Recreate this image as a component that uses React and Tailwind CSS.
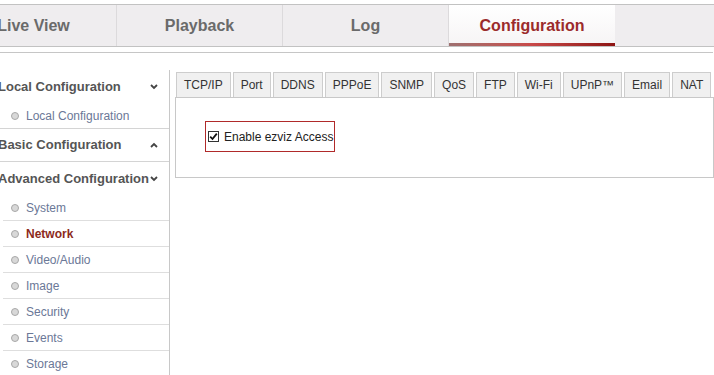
import React from "react";

const topTabs = ["Live View", "Playback", "Log", "Configuration"];
const subTabs = ["TCP/IP", "Port", "DDNS", "PPPoE", "SNMP", "QoS", "FTP", "Wi-Fi", "UPnP™", "Email", "NAT"];
const advItems = ["System", "Network", "Video/Audio", "Image", "Security", "Events", "Storage"];

const Chevron = ({ up }) => (
  <svg width="8" height="6" viewBox="0 0 8 6" className="shrink-0">
    <path
      d={up ? "M1 5 L4 2 L7 5" : "M1 1 L4 4 L7 1"}
      fill="none"
      stroke="#444"
      strokeWidth="1.8"
    />
  </svg>
);

const Dot = () => (
  <span className="w-[8px] h-[8px] rounded-full bg-[#d8d8d8] border border-[#a8a8a8] shrink-0" />
);

const Header = ({ label, up, border }) => (
  <div
    className={`h-[33px] flex items-center justify-between pr-[11px] ${
      border ? "border-b border-[#d4d4d4]" : ""
    }`}
  >
    <span className="-ml-[2px] whitespace-nowrap text-[13px] font-bold text-[#555]">
      {label}
    </span>
    <Chevron up={up} />
  </div>
);

export default function App() {
  return (
    <div
      className="w-[714px] h-[375px] overflow-hidden bg-white"
      style={{ fontFamily: '"Liberation Sans", Arial, sans-serif' }}
    >
      {/* Top navigation */}
      <div className="mt-[4px] h-[43px] flex border-y border-[#c2c2c2] bg-[#efedef]">
        {topTabs.map((t, i) => {
          const active = t === "Configuration";
          return (
            <div
              key={t}
              className={`relative w-[166px] shrink-0 flex items-center justify-center text-[16px] font-bold ${
                i === 0 ? "-ml-[49px]" : ""
              } ${
                active
                  ? "bg-gradient-to-b from-white to-[#f6f4f5] text-[#9b2b2b]"
                  : "border-r border-[#dcdadc] text-[#6a6a6a]"
              }`}
            >
              {t}
              {active && (
                <span className="absolute left-0 right-0 bottom-0 h-[3px] bg-gradient-to-r from-[#9e7070] via-[#c84848] to-[#8e1414]" />
              )}
            </div>
          );
        })}
      </div>
      <div className="mt-[5px] h-px bg-[#c6c6c6] w-[713px]" />

      <div className="flex">
        {/* Sidebar */}
        <div className="w-[170px] shrink-0 mt-[17px] border-r border-[#c8c8c8] h-[310px]">
          <Header label="Local Configuration" />
          <div className="h-[26px] flex items-center gap-[7px] pl-[11px] border-b border-[#d4d4d4]">
            <Dot />
            <span className="text-[12px] text-[#6b7897]">Local Configuration</span>
          </div>
          <Header label="Basic Configuration" up border />
          <Header label="Advanced Configuration" />
          {advItems.map((it) => (
            <div
              key={it}
              className="ml-[3px] h-[26px] flex items-center gap-[7px] pl-[8px] border-b border-[#dedede]"
            >
              <Dot />
              <span
                className={`text-[12px] ${
                  it === "Network" ? "font-bold text-[#8c2a1c]" : "text-[#6b7897]"
                }`}
              >
                {it}
              </span>
            </div>
          ))}
        </div>

        {/* Content */}
        <div className="ml-[5px] w-[539px] mt-[19px]">
          <div className="flex gap-[2px] pl-[1px]">
            {subTabs.map((t) => (
              <div
                key={t}
                className="h-[25px] px-[7px] flex items-center bg-[#f0f0f0] border border-b-0 border-[#cdcdcd] text-[12px] text-[#333]"
              >
                {t}
              </div>
            ))}
          </div>
          <div className="h-[81px] border border-[#c8c8c8] pt-[23px] pl-[29px]">
            <div className="w-[130px] h-[31px] border border-[#b02a2a] flex items-center gap-[5px] pl-[2px]">
              <span className="w-[11px] h-[11px] border border-[#333] bg-white flex items-center justify-center">
                <svg width="9" height="9" viewBox="0 0 9 9">
                  <path d="M1.2 4.6 L3.5 7 L7.8 1.6" fill="none" stroke="#111" strokeWidth="1.8" />
                </svg>
              </span>
              <span className="text-[12px] text-[#222]">Enable ezviz Access</span>
            </div>
          </div>
        </div>
      </div>
    </div>
  );
}
